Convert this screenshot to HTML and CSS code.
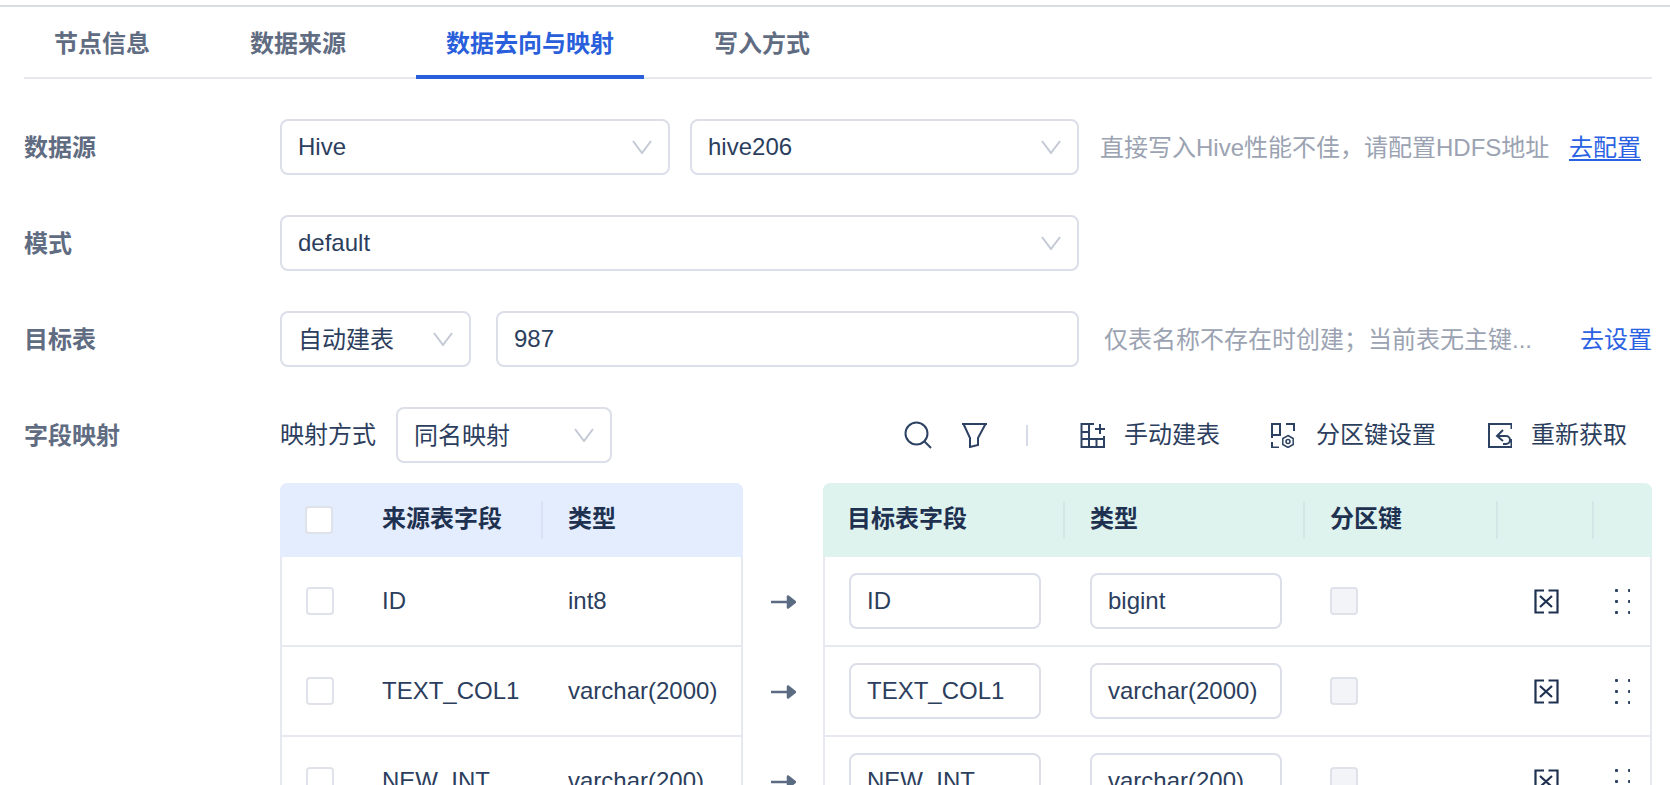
FILE: index.html
```html
<!DOCTYPE html>
<html lang="zh-CN">
<head>
<meta charset="utf-8">
<title>数据去向与映射</title>
<link rel="stylesheet" href="styles.css">
</head>
<body>
<main class="page">
  <nav class="tabs">
    <a class="tab">节点信息</a>
    <a class="tab">数据来源</a>
    <a class="tab tab-active">数据去向与映射</a>
    <a class="tab">写入方式</a>
  </nav>

  <section class="form-row">
    <label class="form-label">数据源</label>
    <div class="field w390"><span>Hive</span><svg class="chev" viewBox="0 0 20 14"><path d="M1 1l9 12 9-12"/></svg></div>
    <div class="field w389 ml20"><span>hive206</span><svg class="chev" viewBox="0 0 20 14"><path d="M1 1l9 12 9-12"/></svg></div>
    <span class="hint hint-a">直接写入Hive性能不佳，请配置HDFS地址</span>
    <a class="link link-u">去配置</a>
  </section>

  <section class="form-row">
    <label class="form-label">模式</label>
    <div class="field w799"><span>default</span><svg class="chev" viewBox="0 0 20 14"><path d="M1 1l9 12 9-12"/></svg></div>
  </section>

  <section class="form-row">
    <label class="form-label">目标表</label>
    <div class="field w191"><span class="cjk">自动建表</span><svg class="chev" viewBox="0 0 20 14"><path d="M1 1l9 12 9-12"/></svg></div>
    <div class="field w583 ml25"><span>987</span></div>
    <span class="hint hint-b">仅表名称不存在时创建；当前表无主键...</span>
    <a class="link link-b">去设置</a>
  </section>

  <section class="form-row mapping-row">
    <label class="form-label">字段映射</label>
    <span class="map-label">映射方式</span>
    <div class="field w216 ml20"><span class="cjk">同名映射</span><svg class="chev" viewBox="0 0 20 14"><path d="M1 1l9 12 9-12"/></svg></div>
    <div class="toolbar">
      <svg class="ico ico-search" viewBox="0 0 28 28"><circle cx="12.5" cy="12.5" r="11"/><path d="M20.5 20.5l6.5 6.5"/></svg>
      <svg class="ico ico-filter" viewBox="0 0 26 26"><path d="M0 2h25M1.500 2L8 16v9l8-2v-7l7.500-14"/></svg>
      <i class="tool-sep"></i>
      <div class="tool tool-a">
        <svg class="ico" viewBox="0 0 25 26"><path d="M14 2H1.500V25H24V14M1.500 10H9M9 2V25M1.500 17H24M16.500 17V25M15 7H25M20 2V12"/></svg>
        <span>手动建表</span>
      </div>
      <div class="tool tool-b">
        <svg class="ico" viewBox="0 0 25 26"><path d="M2 16V2H10V13H2M16 2H24V9M2 20V25.500H9"/><path class="thin" d="M18 13.500l5.200 3v6l-5.200 3-5.200-3v-6z"/><circle class="thin" cx="18" cy="19.500" r="2"/></svg>
        <span>分区键设置</span>
      </div>
      <div class="tool tool-c">
        <svg class="ico" viewBox="0 0 25 26"><path d="M24.500 7V2H2V25H24.500V17M16 8L10 14L16 19M10 14H19A4 4 0 0 1 19 22H16"/></svg>
        <span>重新获取</span>
      </div>
    </div>
  </section>

  <section class="tables">
    <div class="tbl tbl-src">
      <div class="tr th th-blue">
        <div class="c-check c-check-h"><i class="box"></i></div>
        <div class="c-name sep-r">来源表字段</div>
        <div class="c-type">类型</div>
      </div>
      <div class="tr">
        <div class="c-check"><i class="box"></i></div>
        <div class="c-name">ID</div>
        <div class="c-type">int8</div>
      </div>
      <div class="tr">
        <div class="c-check"><i class="box"></i></div>
        <div class="c-name">TEXT_COL1</div>
        <div class="c-type">varchar(2000)</div>
      </div>
      <div class="tr">
        <div class="c-check"><i class="box"></i></div>
        <div class="c-name">NEW_INT</div>
        <div class="c-type">varchar(200)</div>
      </div>
    </div>

    <div class="arrows">
      <svg class="arrow" viewBox="0 0 25 14"><path d="M0 7h18M17 1.500l7 5.500-7 5.500z"/></svg>
      <svg class="arrow" viewBox="0 0 25 14"><path d="M0 7h18M17 1.500l7 5.500-7 5.500z"/></svg>
      <svg class="arrow" viewBox="0 0 25 14"><path d="M0 7h18M17 1.500l7 5.500-7 5.500z"/></svg>
    </div>

    <div class="tbl tbl-dst">
      <div class="tr th th-green">
        <div class="d-1 d-1h sep-r">目标表字段</div>
        <div class="d-2 sep-r">类型</div>
        <div class="d-3 sep-r">分区键</div>
        <div class="d-4 sep-r"></div>
        <div class="d-5"></div>
      </div>
      <div class="tr">
        <div class="d-1"><div class="field w192"><span>ID</span></div></div>
        <div class="d-2"><div class="field w192"><span>bigint</span></div></div>
        <div class="d-3"><i class="box box-off"></i></div>
        <div class="d-4"><svg class="ico-del" viewBox="0 0 25 25"><path d="M10 1.500H1.500V23.500H10M14.500 1.500H23.500V23.500H14.500M6 7l12 11M18 7L6 18"/></svg></div>
        <div class="d-5"><i class="dots"></i></div>
      </div>
      <div class="tr">
        <div class="d-1"><div class="field w192"><span>TEXT_COL1</span></div></div>
        <div class="d-2"><div class="field w192"><span>varchar(2000)</span></div></div>
        <div class="d-3"><i class="box box-off"></i></div>
        <div class="d-4"><svg class="ico-del" viewBox="0 0 25 25"><path d="M10 1.500H1.500V23.500H10M14.500 1.500H23.500V23.500H14.500M6 7l12 11M18 7L6 18"/></svg></div>
        <div class="d-5"><i class="dots"></i></div>
      </div>
      <div class="tr">
        <div class="d-1"><div class="field w192"><span>NEW_INT</span></div></div>
        <div class="d-2"><div class="field w192"><span>varchar(200)</span></div></div>
        <div class="d-3"><i class="box box-off"></i></div>
        <div class="d-4"><svg class="ico-del" viewBox="0 0 25 25"><path d="M10 1.500H1.500V23.500H10M14.500 1.500H23.500V23.500H14.500M6 7l12 11M18 7L6 18"/></svg></div>
        <div class="d-5"><i class="dots"></i></div>
      </div>
    </div>
  </section>
</main>
</body>
</html>
```

FILE: styles.css
```css
* { box-sizing: border-box; }
html, body { margin: 0; height: 785px; overflow: hidden; background: #fff; }
body {
  font-family: "Liberation Sans", "Noto Sans CJK SC", sans-serif;
  font-size: 24px;
  color: #2c3e5d;
  padding-top: 5px;
}
.page { border-top: 2px solid #d9dce3; padding: 0 18px 0 24px; }

.tabs { display: flex; gap: 40px; height: 72px; border-bottom: 2px solid #e6e8ee; }
.tab {
  height: 72px; padding: 0 30px; line-height: 74px;
  font-weight: 600; color: #5f6c82;
}
.tab-active { color: #2a5fdc; border-bottom: 4px solid #2a5fdc; }

.form-row { display: flex; align-items: center; height: 56px; margin-top: 40px; }
.form-label { width: 256px; flex: none; padding-bottom: 4px; font-weight: 600; color: #5f6c82; }
.mapping-row { margin-bottom: 20px; }
.map-label { padding-bottom: 5px; }
.cjk { padding-bottom: 4px; }

.field {
  display: flex; align-items: center; justify-content: space-between; flex: none;
  height: 56px; padding: 0 16px; border: 2px solid #dcdfe9; border-radius: 8px; background: #fff;
  white-space: nowrap;
}
.chev { width: 20px; height: 14px; fill: none; stroke: #c3c9d5; stroke-width: 2; }
.w390 { width: 390px; }
.w389 { width: 389px; }
.w799 { width: 799px; }
.w191 { width: 191px; }
.w583 { width: 583px; }
.w216 { width: 216px; }
.w192 { width: 192px; }
.ml20 { margin-left: 20px; }
.ml25 { margin-left: 25px; }

.hint { color: #9ba3b2; white-space: nowrap; padding-bottom: 4px; }
.hint-a { margin-left: 21px; }
.hint-b { margin-left: 25px; }
.link { color: #2b62e3; white-space: nowrap; margin-left: auto; padding-bottom: 4px; }
.link-u { margin-right: 11px; text-decoration: underline; text-underline-offset: 3px; }

.toolbar { display: flex; align-items: center; margin-left: auto; margin-right: 25px; }
.tool { display: flex; align-items: center; }
.tool span { padding-bottom: 5px; }
.tool-a { gap: 19px; margin-left: 52px; }
.tool-b { gap: 21px; margin-left: 50px; }
.tool-c { gap: 19px; margin-left: 51px; }
.ico { width: 25px; height: 26px; flex: none; fill: none; stroke: #2d4263; stroke-width: 2; }
.ico .thin { stroke-width: 1.5; }
.ico-search { width: 28px; height: 28px; margin-right: 30px; }
.ico-filter { width: 26px; height: 26px; }
.tool-sep { width: 2px; height: 21px; margin-left: 38px; background: #d5dbe8; }

.tables { display: flex; align-items: flex-start; }
.tbl { flex: none; border: 2px solid #e6e9f0; border-top: 0; border-bottom: 0; border-radius: 8px 8px 0 0; }
.tbl-src { width: 463px; margin-left: 256px; }
.tbl-dst { width: 829px; }
.tr { display: flex; align-items: center; height: 90px; border-bottom: 2px solid #e6e9f0; }
.th {
  height: 74px; margin: 0 -2px; padding: 0 2px; border-bottom: 0; border-radius: 8px 8px 0 0;
  font-weight: 600; color: #1f3150;
}
.th-blue { background: #e3edfd; }
.th-green { background: #def2ee; }
.sep-r { position: relative; }
.sep-r::after {
  content: ""; position: absolute; right: 0; top: 50%;
  width: 2px; height: 38px; margin-top: -19px; background: rgba(120, 140, 170, .1);
}
.c-check { width: 100px; padding-left: 24px; display: flex; align-items: center; }
.c-check-h { padding-left: 23px; }
.c-name { width: 161px; height: 38px; line-height: 38px; white-space: nowrap; }
.c-type { padding-left: 25px; white-space: nowrap; }
.box { display: block; width: 28px; height: 28px; background: #fff; border: 2px solid #dfe2ea; border-radius: 4px; }
.box-off { background: #f3f4f7; }

.arrows { width: 80px; flex: none; padding-top: 112px; display: flex; flex-direction: column; gap: 76px; align-items: center; }
.arrow { width: 25px; height: 14px; flex: none; fill: #5b6b82; stroke: #5b6b82; stroke-width: 2.500; stroke-linejoin: round; }

.d-1, .d-2, .d-3, .d-4, .d-5 { display: flex; align-items: center; height: 38px; flex: none; white-space: nowrap; }
.d-1 { width: 240px; padding-left: 24px; }
.d-1h { padding-left: 22px; }
.d-2 { width: 240px; padding-left: 25px; }
.d-3 { width: 193px; padding-left: 25px; }
.d-4 { width: 96px; justify-content: center; }
.d-5 { width: 56px; justify-content: center; }
.th .c-name, .th .c-type, .th .d-1, .th .d-2, .th .d-3 { height: 38px; line-height: 36px; align-items: flex-start; }
.ico-del { width: 25px; height: 25px; fill: none; stroke: #1f3150; stroke-width: 2.200; }
.dots {
  display: block; width: 15px; height: 25px;
  background: radial-gradient(circle, #2d4263 1.300px, transparent 1.800px) -5px -4px / 13px 11px;
}
```
